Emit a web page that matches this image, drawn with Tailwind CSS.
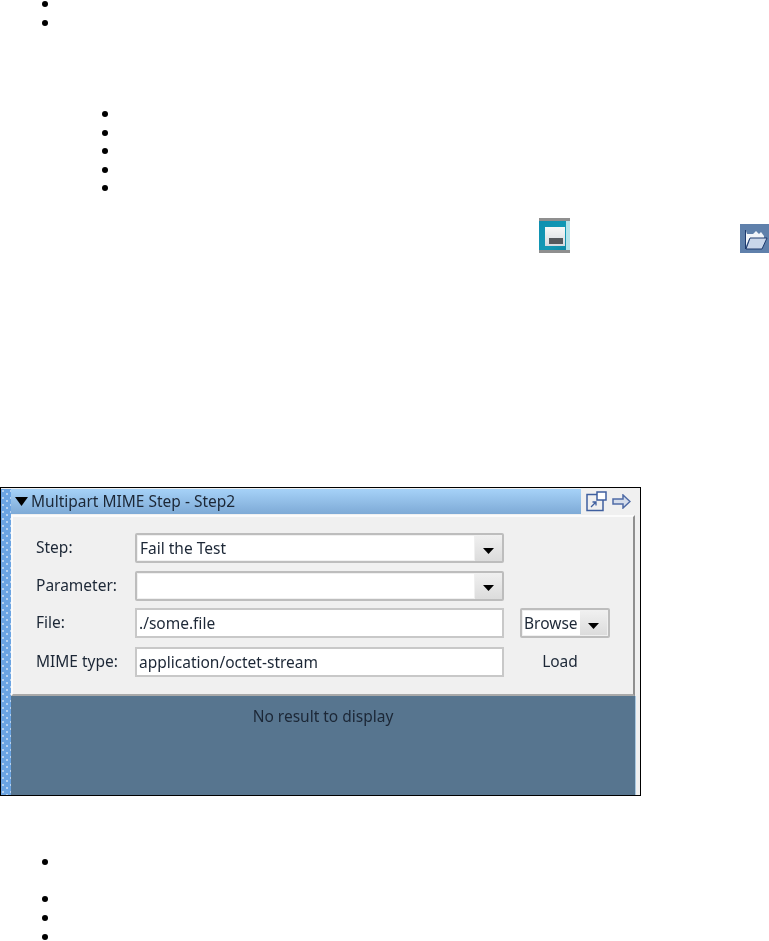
<!DOCTYPE html>
<html><head><meta charset="utf-8"><script src="https://cdn.jsdelivr.net/npm/@tailwindcss/browser@4"></script></head>
<body class="bg-white">
<div class="h-[941px] w-[769px] overflow-hidden flex flex-col font-['Noto_Sans',sans-serif] text-[15.5px] text-[#1c2736]">
  <ul class="ml-[42px] mt-px flex flex-col gap-[13px]">
    <li class="size-[6px] rounded-full bg-black"></li>
    <li class="size-[6px] rounded-full bg-black"></li>
  </ul>
  <ul class="ml-[102px] mt-[85px] flex flex-col gap-[12.5px]">
    <li class="size-[6px] rounded-full bg-black"></li>
    <li class="size-[6px] rounded-full bg-black"></li>
    <li class="size-[6px] rounded-full bg-black"></li>
    <li class="size-[6px] rounded-full bg-black"></li>
    <li class="size-[6px] rounded-full bg-black"></li>
  </ul>
  <div class="mt-[27px] flex items-end h-[35px]">
    <svg class="ml-[539px] blur-[0.6px]" width="31" height="35" viewBox="0 0 31 35">
      <defs><linearGradient id="fr" x1="0" y1="0" x2="1" y2="1"><stop offset="0" stop-color="#0f8fb0"/><stop offset="0.6" stop-color="#1399b5"/><stop offset="1" stop-color="#0d86a3"/></linearGradient>
      <linearGradient id="ins" x1="0" y1="0" x2="0" y2="1"><stop offset="0" stop-color="#f7f7f7"/><stop offset="1" stop-color="#d5dbe0"/></linearGradient></defs>
      <rect width="31" height="3" fill="#8f8f8f"/><rect y="32" width="31" height="3" fill="#8f8f8f"/>
      <rect y="3" width="31" height="29" fill="url(#fr)"/>
      <rect x="27" y="3" width="4" height="29" fill="#b5e3ea"/>
      <rect x="6" y="9" width="20" height="19" fill="url(#ins)"/>
      <rect x="10" y="20" width="14" height="6" fill="#55595d"/>
    </svg>
    <svg class="ml-[170px] blur-[0.5px]" width="29" height="29" viewBox="0 0 29 29">
      <rect width="29" height="29" fill="#5f80ab"/>
      <path d="M6 22V7l1 3h6l3-3 3 3 2-2 3 4v3H9z" fill="#f2f5fa"/>
      <path d="M6 25l4-11h17l-5 11H6z" fill="#c9d6ea" stroke="#1e3a6e"/>
      <path d="M5.500 25V6" fill="none" stroke="#1e3a6e"/>
    </svg>
  </div>

  <div class="mt-[234px] h-[309px] w-[641px] shrink-0 border border-black bg-[#f0f0f0] flex pt-px">
    <div class="w-[10px] blur-[0.3px] bg-[#6ba4e2] bg-[radial-gradient(circle_at_2px_2px,#b6d2f0_1px,transparent_1px),radial-gradient(circle_at_6px_5px,#b6d2f0_1px,transparent_1px)] bg-[length:8px_7px]"></div>
    <div class="flex-1 flex flex-col min-w-0 blur-[0.3px]">
      <div class="h-[25px] flex shrink-0">
        <div class="w-[570px] bg-gradient-to-b from-[#a6d2f8] to-[#7eaad6] flex items-center pl-[4px] gap-[3px]">
          <svg width="13" height="9" viewBox="0 0 13 9"><path d="M0 0h13L6.500 9z" fill="#000"/></svg>
          <span class="leading-none">Multipart MIME Step - Step2</span>
        </div>
        <div class="flex items-center pl-[5px] gap-[5px]">
          <svg width="21" height="21" viewBox="0 0 21 21" fill="none" stroke="#3f5f9f" stroke-width="1.500">
            <path d="M11 3.500H1v16h16V9"/><rect x="11" y="1" width="9" height="8" fill="#fff"/>
            <path d="M5 16l5-5M6.500 11H10v3.500" stroke-width="1.300"/>
          </svg>
          <svg width="19" height="15" viewBox="0 0 19 15" fill="#d5ddeb" stroke="#4f6ba6" stroke-width="1.500"><path d="M1 5h10V1l7 6.500-7 6.500V10H1z"/></svg>
        </div>
      </div>
      <div class="flex-1 flex flex-col mt-px">
        <div class="w-[624px] h-[181px] border-l-2 border-t-2 border-l-white/70 border-t-white/70 border-b-2 border-b-[#a9a9a9] border-r-2 border-r-[#8f8f8f] pl-[23px] pt-[16px] flex flex-col gap-[7.5px]">
          <div class="flex items-center h-[30px]">
            <span class="w-[99px]">Step:</span>
            <div class="w-[369px] h-[30px] border-2 border-[#bdbdbd] rounded-[2px] flex bg-[#f0f0f0]">
              <div class="flex-1 bg-white pl-[2px] leading-[24px] m-px">Fail the Test</div>
              <div class="w-[27px] bg-gradient-to-b from-[#f0f0f0] to-[#dcdcdc] flex items-center justify-center pt-[5px]"><svg width="11" height="6" viewBox="0 0 11 6"><path d="M0 0h11L5.500 6z" fill="#000"/></svg></div>
            </div>
          </div>
          <div class="flex items-center h-[30px]">
            <span class="w-[99px]">Parameter:</span>
            <div class="w-[369px] h-[30px] border-2 border-[#bdbdbd] rounded-[2px] flex bg-[#f0f0f0]">
              <div class="flex-1 bg-white m-px"></div>
              <div class="w-[27px] bg-gradient-to-b from-[#f0f0f0] to-[#dcdcdc] flex items-center justify-center pt-[5px]"><svg width="11" height="6" viewBox="0 0 11 6"><path d="M0 0h11L5.500 6z" fill="#000"/></svg></div>
            </div>
          </div>
          <div class="flex items-center h-[30px]">
            <span class="w-[99px]">File:</span>
            <div class="w-[369px] h-[30px] border-2 border-[#c8c8c8] bg-white pl-[2px] leading-[26px]">./some.file</div>
            <div class="ml-[16px] w-[90px] h-[30px] border-2 border-[#bdbdbd] rounded-[2px] flex p-px">
              <div class="w-[57px] bg-white pl-[1px] leading-[24px]">Browse</div>
              <div class="flex-1 bg-gradient-to-b from-[#f0f0f0] to-[#dcdcdc] flex items-center justify-center pt-[5px]"><svg width="11" height="6" viewBox="0 0 11 6"><path d="M0 0h11L5.500 6z" fill="#000"/></svg></div>
            </div>
          </div>
          <div class="flex items-center h-[30px] mt-[1px]">
            <span class="w-[99px]">MIME type:</span>
            <div class="w-[369px] h-[30px] border-2 border-[#c8c8c8] bg-white pl-[2px] leading-[26px]">application/octet-stream</div>
            <div class="ml-[16px] w-[80px] text-center">Load</div>
          </div>
        </div>
        <div class="w-[625px] flex-1 bg-[#57758f] border-r border-r-[#a9c8e0] text-center pt-[10px] leading-[20px]">No result to display</div>
      </div>
    </div>
  </div>

  <ul class="ml-[42px] mt-[62.5px] flex flex-col gap-[13px]">
    <li class="size-[6px] rounded-full bg-black mb-[18.5px]"></li>
    <li class="size-[6px] rounded-full bg-black"></li>
    <li class="size-[6px] rounded-full bg-black"></li>
    <li class="size-[6px] rounded-full bg-black"></li>
  </ul>
</div>
</body></html>
